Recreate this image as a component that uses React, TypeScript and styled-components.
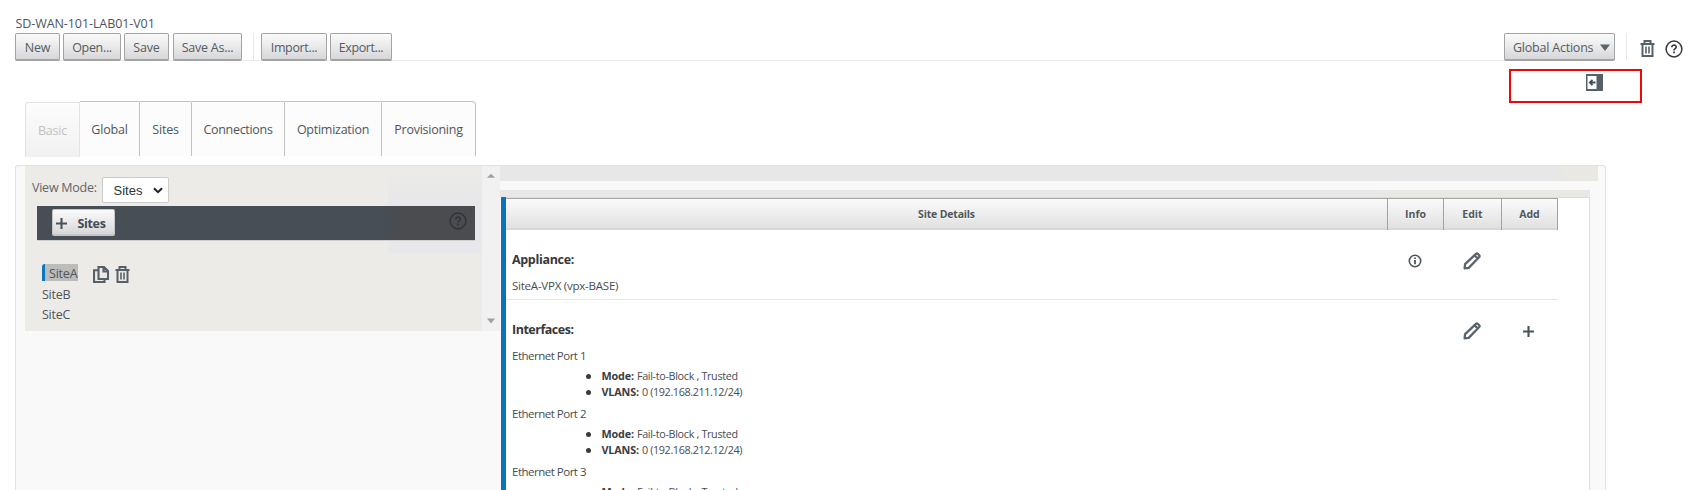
import React from 'react';
import styled, { createGlobalStyle, css } from 'styled-components';

const GlobalStyle = createGlobalStyle`
  * { box-sizing: border-box; }
  html, body { margin: 0; padding: 0; background: #fff; overflow: hidden; }
  body { font-family: "Open Sans", "Noto Sans", sans-serif; font-size: 12.5px; color: #4f555b; }
  ul { list-style: none; margin: 0; padding: 0; }
  svg { display: block; flex: none; }
`;

const Page = styled.div`
  width: 1689px;
  height: 490px;
  overflow: hidden;
  display: flex;
  flex-direction: column;
  padding-top: 13px;
  > * { flex: none; }
`;

const Text = styled.span<{ $track?: number }>`
  letter-spacing: ${p => p.$track ?? 0}px;
  white-space: nowrap;
`;

const FileName = styled.div`
  height: 20px;
  line-height: 22px;
  padding-left: 15.5px;
`;

const Toolbar = styled.div`
  display: flex;
  height: 28px;
  padding-left: 15px;
`;

const FileActions = styled.div`
  display: flex;
  width: 1489px;
  box-shadow: inset 0 -1px #ebeae6;
`;

const Button = styled.button<{ $width: number; $gap?: number }>`
  width: ${p => p.$width}px;
  height: 28px;
  margin: 0 ${p => p.$gap ?? 0}px 0 0;
  padding: 2px 0 0;
  display: flex;
  align-items: center;
  justify-content: center;
  font: inherit;
  color: #555c63;
  border: 1px solid #a3a3a3;
  border-bottom-width: 2px;
  border-radius: 2px;
  background: linear-gradient(#fafafa, #e8e8e9 55%, #d6d7d9);
`;

const ActionsMenu = styled(Button)`
  padding: 1px 4px 0 8px;
  justify-content: space-between;
`;

const Rule = styled.i<{ $gap: number }>`
  width: 1px;
  height: 27px;
  margin-right: ${p => p.$gap}px;
  background: #e9e8e4;
`;

const ToolIcons = styled.div`
  display: flex;
  align-items: center;
  gap: 10px;
  padding-top: 3px;
`;

const CollapseBar = styled.div`
  height: 40px;
  padding: 8px 0 0 1509px;
`;

const Highlight = styled.div`
  width: 133px;
  height: 34px;
  padding: 3px 0 0 75px;
  border: 2px solid #f00808;
`;

const Tabs = styled.nav`
  display: flex;
  height: 64px;
  padding-left: 25px;
`;

const Tab = styled.a<{ $width: number; $active?: boolean }>`
  width: ${p => p.$width}px;
  height: 55px;
  line-height: 54px;
  padding: 1px 0 0;
  text-align: center;
  border: solid #c2c2c2;
  border-width: 1px 1px 0 0;
  border-radius: 0 2px 0 0;
  background: #fcfcfc;
  &:last-child { border-top-right-radius: 4px; }
  ${p => p.$active && css`
    margin-top: 1px;
    color: #bfc1c3;
    border: 1px solid #e3e3e3;
    border-bottom: 0;
    border-radius: 3px 0 0 0;
    background: linear-gradient(#fcfcfc, #f1f1f1);
  `}
`;

const Panel = styled.main`
  display: flex;
  width: 1591px;
  height: 325px;
  margin-left: 15px;
  padding-left: 9px;
  border: 1px solid #e2e2e2;
  border-bottom: 0;
  border-radius: 3px 3px 0 0;
  background: #f9f9f9;
`;

const Sidebar = styled.aside`
  display: flex;
  width: 475px;
  height: 165px;
  background: #ecebe7;
`;

const SidebarBody = styled.div`
  width: 457px;
  background: linear-gradient(rgba(232, 232, 235, 0), #e8e8ea 35%) 363px 0 / 94px 88px no-repeat;
`;

const ViewMode = styled.label`
  display: flex;
  height: 40px;
  padding: 11px 0 3px 7px;
`;

const ViewLabel = styled(Text)`
  width: 69.5px;
  line-height: 22px;
  color: #62666a;
`;

const Select = styled.div`
  display: flex;
  align-items: center;
  justify-content: space-between;
  width: 67px;
  height: 26px;
  padding: 0 5px 0 11px;
  font: 13px "Liberation Sans", sans-serif;
  color: #333;
  border: 1px solid #ccc;
  border-radius: 2px;
  background: #fff;
`;

const SitesBar = styled.div`
  display: flex;
  justify-content: space-between;
  width: 438px;
  height: 34px;
  margin-left: 12px;
  padding: 3px 8px 0 15px;
  background: linear-gradient(90deg, #474e56 78%, #4a4c50 83%);
  box-shadow: 0 1px #cfcfcd;
`;

const AddSites = styled(Button)`
  height: 27px;
  gap: 10px;
  padding-right: 5px;
  font-weight: 700;
  color: #444b52;
  border-color: #c6c6c6;
`;

const BarHelp = styled.div`
  padding-top: 3px;
`;

const SiteList = styled.ul`
  padding: 24px 0 0 17px;
`;

const Site = styled.li`
  display: flex;
  height: 20px;
  line-height: 22px;
`;

const SelectedSite = styled.span`
  width: 36px;
  height: 17px;
  line-height: 19px;
  padding-left: 4px;
  margin-right: 15px;
  border-left: 3px solid #0c77bd;
  border-radius: 3px 0 0 0;
  background: #bcbcba;
`;

const SiteTools = styled.span`
  display: flex;
  gap: 6px;
  padding-top: 2px;
`;

const ScrollTrack = styled.div`
  display: flex;
  flex-direction: column;
  justify-content: space-between;
  align-items: center;
  width: 18px;
  padding: 7px 0;
  background: #f1f1f1;
`;

const Main = styled.section`
  width: 1098px;
`;

const Band = styled.div<{ $width: number; $height: number; $split: number; $gap?: number }>`
  width: ${p => p.$width}px;
  height: ${p => p.$height}px;
  margin-bottom: ${p => p.$gap ?? 0}px;
  background: linear-gradient(90deg, #e7e7e7 ${p => p.$split}px, #e9e8e3 ${p => p.$split}px);
`;

const Details = styled.div`
  width: 1089px;
  margin-left: 1px;
  height: 293px;
  border: solid #dddcd7;
  border-width: 1px 1px 0 0;
  background: #fff;
  display: flex;
`;

const Marker = styled.div`
  width: 5px;
  margin-top: -1px;
  background: #0b73b9;
`;

const Table = styled.div`
  width: 1052px;
  height: 292px;
  overflow: hidden;
  color: #484c50;
`;

const columns = css`
  display: grid;
  grid-template-columns: 882px 56px 58px 56px;
`;

const HeadRow = styled.div`
  ${columns}
  height: 32px;
  border-top: 1px solid #a6a6a6;
  border-bottom: 2px solid #dad7d4;
  background: linear-gradient(#fbfbfb, #e1e1e1);
`;

const HeadCell = styled.div`
  font-size: 10.5px;
  font-weight: 700;
  line-height: 31px;
  text-align: center;
  color: #50565c;
  text-shadow: 0 1px #fff;
  border-right: 1px solid #a0a2a4;
`;

const Row = styled.div<{ $height: number }>`
  ${columns}
  height: ${p => p.$height}px;
  border-bottom: 1px solid #e6e6e6;
`;

const Info = styled.div`
  padding: 18px 0 0 6px;
`;

const IconCell = styled.div<{ $top: number }>`
  display: flex;
  justify-content: center;
  align-items: flex-start;
  padding: ${p => p.$top}px 3px 0 0;
`;

const SectionTitle = styled.div`
  height: 27px;
  line-height: 24px;
  font-weight: 700;
  color: #35383b;
`;

const Line = styled.div`
  height: 20px;
  line-height: 22px;
  font-size: 11.5px;
`;

const PortProps = styled.ul`
  height: 38px;
  padding: 3px 0 0 76px;
`;

const PortProp = styled.li`
  display: flex;
  align-items: center;
  height: 16px;
  line-height: 16px;
  font-size: 10.8px;
  &::before {
    content: "";
    width: 5px;
    height: 5px;
    margin: 0 10.5px 0 -2px;
    border-radius: 50%;
    background: #3a3a3a;
  }
`;

const PropName = styled.b`
  margin-right: 3px;
  letter-spacing: -0.15px;
  color: #3a3d40;
`;

const Trash = () => (
  <svg width="15" height="17" viewBox="0 0 15 17" fill="none" stroke="#566069" strokeWidth="2">
    <path d="M4.5 3V1h6v2M.5 4h14M2.5 4.5V16h10V4.5" />
    <path d="M6 6.5v7M9 6.5v7" strokeWidth="1.6" />
  </svg>
);

const Help = ({ color = '#34383c' }: { color?: string }) => (
  <svg width="18" height="18" viewBox="0 0 18 18" fill="none" stroke={color}>
    <circle cx="9" cy="9" r="7.9" strokeWidth="1.5" />
    <path d="M6.8 7.2c0-3 4.6-2.7 4.4-.1C11.1 8.7 9 8.5 9 10.4" strokeWidth="1.6" />
    <path d="M9 11.5v1.7" strokeWidth="1.8" />
  </svg>
);

const Collapse = () => (
  <svg width="17" height="17" viewBox="0 0 17 17">
    <path d="M0 0h17v17H0z" fill="#566069" />
    <path d="M1.5 2h9v13h-9z" fill="#fff" />
    <path d="M9.5 8.5H4M6.5 5.8L3.8 8.5l2.7 2.7" fill="none" stroke="#444b52" strokeWidth="1.8" />
  </svg>
);

const Copy = () => (
  <svg width="16" height="17" viewBox="0 0 16 17" fill="none" stroke="#566069" strokeWidth="2.1">
    <path d="M5.5 1h5.5l4 4v8h-9.5zM10.5 1v4.5H15" />
    <path d="M5 4.2H1V16h10.5v-2.5" />
  </svg>
);

const Pencil = () => (
  <svg width="18" height="18" viewBox="0 0 18 18" fill="none" stroke="#5b646d" strokeWidth="2.3" strokeLinejoin="round">
    <path d="M1.6 16.4l.5-4.2L13 1.8q.9-.7 1.7 0l1.5 1.5q.8.9 0 1.7L5.7 15.9zM11.5 3.3l3.2 3.2" />
  </svg>
);

const InfoMark = () => (
  <svg width="14" height="14" viewBox="0 0 14 14" fill="none" stroke="#4c5560">
    <circle cx="7" cy="7" r="5.7" strokeWidth="1.6" />
    <path d="M7 6v4.3M7 3.6v1.5" strokeWidth="1.8" />
  </svg>
);

const Plus = () => (
  <svg width="11" height="11" viewBox="0 0 11 11" stroke="#4a525a" strokeWidth="2.1">
    <path d="M5.5 0v11M0 5.5h11" />
  </svg>
);

const Chevron = () => (
  <svg width="10" height="7" viewBox="0 0 10 7" fill="none" stroke="#222" strokeWidth="2">
    <path d="M1 1.2l4 4 4-4" />
  </svg>
);

const Triangle = ({ up, size = 8, color = '#a0a0a0' }: { up?: boolean; size?: number; color?: string }) => (
  <svg width={size} height={size * 0.7} viewBox="0 0 10 7" preserveAspectRatio="none" fill={color}>
    <path d={up ? 'M0 6l5-5 5 5z' : 'M0 .5h10L5 7z'} />
  </svg>
);

const tabs: [string, number, number][] = [
  ['Global', 60, -0.2],
  ['Sites', 52, -0.2],
  ['Connections', 93, -0.3],
  ['Optimization', 97, -0.26],
  ['Provisioning', 94, -0.25],
];

const ports: [number, string][] = [
  [1, '192.168.211.12/24'],
  [2, '192.168.212.12/24'],
  [3, '192.168.213.12/24'],
];

export default function App() {
  return (
    <Page>
      <GlobalStyle />
      <FileName><Text $track={-0.08}>SD-WAN-101-LAB01-V01</Text></FileName>
      <Toolbar>
        <FileActions>
          <Button $width={45} $gap={3}><Text $track={-0.2}>New</Text></Button>
          <Button $width={58} $gap={3}><Text $track={-0.32}>Open...</Text></Button>
          <Button $width={45} $gap={4}><Text $track={-0.2}>Save</Text></Button>
          <Button $width={69} $gap={11}><Text $track={-0.25}>Save As...</Text></Button>
          <Rule $gap={7} />
          <Button $width={66} $gap={3}><Text $track={-0.35}>Import...</Text></Button>
          <Button $width={62}><Text $track={-0.4}>Export...</Text></Button>
        </FileActions>
        <ActionsMenu $width={111} $gap={11}>
          <Text $track={-0.22}>Global Actions</Text>
          <Triangle size={10} color="#5b646d" />
        </ActionsMenu>
        <Rule $gap={13} />
        <ToolIcons><Trash /><Help /></ToolIcons>
      </Toolbar>
      <CollapseBar><Highlight><Collapse /></Highlight></CollapseBar>
      <Tabs>
        <Tab $width={55} $active><Text $track={-0.2}>Basic</Text></Tab>
        {tabs.map(([name, width, track]) => (
          <Tab key={name} $width={width}><Text $track={track}>{name}</Text></Tab>
        ))}
      </Tabs>
      <Panel>
        <Sidebar>
          <SidebarBody>
            <ViewMode>
              <ViewLabel $track={-0.25}>View Mode:</ViewLabel>
              <Select>Sites<Chevron /></Select>
            </ViewMode>
            <SitesBar>
              <AddSites $width={63}><Plus /><Text $track={-0.3}>Sites</Text></AddSites>
              <BarHelp><Help color="#303338" /></BarHelp>
            </SitesBar>
            <SiteList>
              <Site>
                <SelectedSite><Text $track={-0.2}>SiteA</Text></SelectedSite>
                <SiteTools><Copy /><Trash /></SiteTools>
              </Site>
              <Site><Text $track={-0.25}>SiteB</Text></Site>
              <Site><Text $track={-0.25}>SiteC</Text></Site>
            </SiteList>
          </SidebarBody>
          <ScrollTrack><Triangle up /><Triangle /></ScrollTrack>
        </Sidebar>
        <Main>
          <Band $width={1098} $height={15} $split={1062} $gap={9} />
          <Band $width={1090} $height={7} $split={882} />
          <Details>
            <Marker />
            <Table>
              <HeadRow>
                <HeadCell><Text $track={-0.18}>Site Details</Text></HeadCell>
                <HeadCell>Info</HeadCell>
                <HeadCell>Edit</HeadCell>
                <HeadCell>Add</HeadCell>
              </HeadRow>
              <Row $height={70}>
                <Info>
                  <SectionTitle><Text $track={-0.33}>Appliance:</Text></SectionTitle>
                  <Line><Text $track={-0.23}>SiteA-VPX (vpx-BASE)</Text></Line>
                </Info>
                <IconCell $top={24}><InfoMark /></IconCell>
                <IconCell $top={22}><Pencil /></IconCell>
              </Row>
              <Row $height={240}>
                <Info>
                  <SectionTitle><Text $track={-0.48}>Interfaces:</Text></SectionTitle>
                  {ports.map(([port, address]) => (
                    <React.Fragment key={port}>
                      <Line><Text $track={-0.5}>Ethernet Port {port}</Text></Line>
                      <PortProps>
                        <PortProp><PropName>Mode:</PropName><Text $track={-0.33}>Fail-to-Block , Trusted</Text></PortProp>
                        <PortProp><PropName>VLANS:</PropName><Text $track={-0.38}>0 ({address})</Text></PortProp>
                      </PortProps>
                    </React.Fragment>
                  ))}
                </Info>
                <IconCell $top={0} />
                <IconCell $top={22}><Pencil /></IconCell>
                <IconCell $top={26}><Plus /></IconCell>
              </Row>
            </Table>
          </Details>
        </Main>
      </Panel>
    </Page>
  );
}
